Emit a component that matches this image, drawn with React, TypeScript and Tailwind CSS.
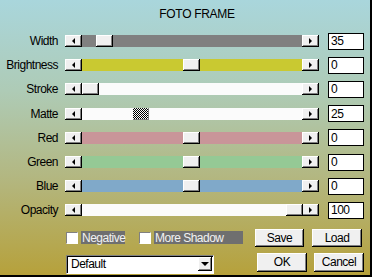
import React from "react";

const raised =
  "bg-[#f0f0f0] shadow-[inset_-1px_-1px_0_#000,inset_1px_1px_0_#fff,inset_-2px_-2px_0_#808080]";

type Row = { label: string; track: string; thumb: number; value: string; checker?: boolean };

const rows: Row[] = [
  { label: "Width", track: "bg-[#808080]", thumb: 14, value: "35" },
  { label: "Brightness", track: "bg-[#c9c931]", thumb: 101, value: "0" },
  { label: "Stroke", track: "bg-[#fbfbfb]", thumb: 0, value: "0" },
  { label: "Matte", track: "bg-[#fbfbfb]", thumb: 51, value: "25", checker: true },
  { label: "Red", track: "bg-[#c99599]", thumb: 101, value: "0" },
  { label: "Green", track: "bg-[#95c995]", thumb: 101, value: "0" },
  { label: "Blue", track: "bg-[#80a9c9]", thumb: 101, value: "0" },
  { label: "Opacity", track: "bg-[#fbfbfb]", thumb: 204, value: "100" },
];

function Slider({ row }: { row: Row }) {
  return (
    <div className="flex h-[12px] w-[254px]">
      <div className={`${raised} flex w-[17px] items-center justify-center`}>
        <span className="border-y-[3px] border-r-[3px] border-y-transparent border-r-black" />
      </div>
      <div className={`relative flex-1 ${row.track}`}>
        <div
          className={
            row.checker
              ? "absolute top-0 h-full w-[16px] bg-[repeating-conic-gradient(#000_0_25%,#fff_0_50%)] bg-[length:2px_2px] shadow-[inset_-1px_-1px_0_#808080]"
              : `absolute top-0 h-full w-[17px] ${raised}`
          }
          style={{ left: row.thumb }}
        />
      </div>
      <div className={`${raised} flex w-[17px] items-center justify-center`}>
        <span className="border-y-[3px] border-l-[3px] border-y-transparent border-l-black" />
      </div>
    </div>
  );
}

function Check({ label, w }: { label: string; w: string }) {
  return (
    <div className="flex items-center">
      <div className="h-[12px] w-[12px] border border-t-[#808080] border-l-[#808080] border-b-white border-r-white bg-white" />
      <div className={`ml-[3px] flex h-[13px] items-center bg-[#6f6f6f] pl-[1px] text-[#f2f2f2] ${w}`}>
        {label}
      </div>
    </div>
  );
}

export default function App() {
  return (
    <div
      className="flex h-[277px] w-[372px] flex-col border-r-2 border-b-2 border-black bg-[linear-gradient(180deg,#a9d6dc_0%,#aecbb6_33%,#b3b67e_66%,#b6a13b_100%)] text-[12px] leading-none tracking-[-0.5px] text-black"
      style={{ fontFamily: '"Liberation Sans", Arial, sans-serif' }}
    >
      <div className="flex h-[29px] items-center justify-center pl-[24px] pb-[1px] tracking-[-0.3px]">
        FOTO FRAME
      </div>
      {rows.map((r) => (
        <div key={r.label} className="flex h-[24.2px] items-center">
          <div className="w-[58px] text-right">{r.label}</div>
          <div className="ml-[7px]">
            <Slider row={r} />
          </div>
          <div className="ml-[9px] flex h-[17px] w-[36px] items-center border border-black bg-white pl-[2px]">
            {r.value}
          </div>
        </div>
      ))}
      <div className="mt-[6px] flex h-[18px] items-center pl-[66px]">
        <Check label="Negative" w="w-[44px]" />
        <div className="ml-[14px]">
          <Check label="More Shadow" w="w-[89px]" />
        </div>
        <button className={`${raised} ml-[12px] h-[18px] w-[49px]`}>Save</button>
        <button className={`${raised} ml-[8px] h-[18px] w-[50px]`}>Load</button>
      </div>
      <div className="mt-[6px] flex h-[21px] pl-[66px]">
        <div className="flex h-[19px] w-[148px] items-center self-end border border-t-[#808080] border-l-[#808080] border-b-white border-r-white bg-white pl-[4px] shadow-[inset_1px_1px_0_#000]">
          <span className="flex-1">Default</span>
          <div className={`${raised} mr-[1px] flex h-[14px] w-[14px] items-center justify-center`}>
            <span className="border-x-[4px] border-t-[4px] border-x-transparent border-t-black" />
          </div>
        </div>
        <button className={`${raised} ml-[43px] h-[19px] w-[50px]`}>OK</button>
        <button className={`${raised} ml-[7px] h-[19px] w-[50px]`}>Cancel</button>
      </div>
    </div>
  );
}
